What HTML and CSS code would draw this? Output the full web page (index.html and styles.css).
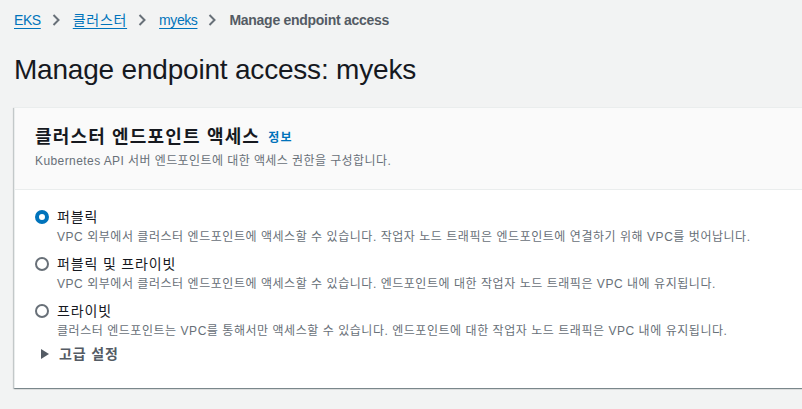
FILE: index.html
```html
<!DOCTYPE html>
<html lang="ko">
<head>
<meta charset="utf-8">
<title>Manage endpoint access</title>
<link rel="stylesheet" href="styles.css">
</head>
<body>
<div class="page">
  <nav class="breadcrumb">
    <a class="crumb-link" href="#">EKS</a>
    <svg class="chev" width="8" height="12" viewBox="0 0 8 12"><path d="M1.5 1 L6.5 6 L1.5 11" fill="none" stroke="#687078" stroke-width="2"/></svg>
    <a class="crumb-link ko" href="#">클러스터</a>
    <svg class="chev" width="8" height="12" viewBox="0 0 8 12"><path d="M1.5 1 L6.5 6 L1.5 11" fill="none" stroke="#687078" stroke-width="2"/></svg>
    <a class="crumb-link" href="#">myeks</a>
    <svg class="chev" width="8" height="12" viewBox="0 0 8 12"><path d="M1.5 1 L6.5 6 L1.5 11" fill="none" stroke="#687078" stroke-width="2"/></svg>
    <span class="crumb-current">Manage endpoint access</span>
  </nav>
  <h1 class="title">Manage endpoint access: myeks</h1>
  <section class="card">
    <header class="card-header">
      <h2 class="card-title">클러스터 엔드포인트 액세스 <a class="info" href="#">정보</a></h2>
      <p class="card-desc">Kubernetes API 서버 엔드포인트에 대한 액세스 권한을 구성합니다.</p>
    </header>
    <div class="card-body">
      <div class="radio-item">
        <span class="radio checked"></span>
        <div class="radio-text">
          <div class="radio-label">퍼블릭</div>
          <div class="radio-desc">VPC 외부에서 클러스터 엔드포인트에 액세스할 수 있습니다. 작업자 노드 트래픽은 엔드포인트에 연결하기 위해 VPC를 벗어납니다.</div>
        </div>
      </div>
      <div class="radio-item">
        <span class="radio"></span>
        <div class="radio-text">
          <div class="radio-label">퍼블릭 및 프라이빗</div>
          <div class="radio-desc">VPC 외부에서 클러스터 엔드포인트에 액세스할 수 있습니다. 엔드포인트에 대한 작업자 노드 트래픽은 VPC 내에 유지됩니다.</div>
        </div>
      </div>
      <div class="radio-item">
        <span class="radio"></span>
        <div class="radio-text">
          <div class="radio-label">프라이빗</div>
          <div class="radio-desc">클러스터 엔드포인트는 VPC를 통해서만 액세스할 수 있습니다. 엔드포인트에 대한 작업자 노드 트래픽은 VPC 내에 유지됩니다.</div>
        </div>
      </div>
      <div class="advanced">
        <svg class="caret" width="10" height="12" viewBox="0 0 10 12"><path d="M1 1 L9 6 L1 11 Z" fill="#545b64"/></svg>
        <span>고급 설정</span>
      </div>
    </div>
  </section>
</div>
</body>
</html>
```

FILE: styles.css
```css
* { box-sizing: border-box; }
html, body { margin: 0; padding: 0; }
body {
  background: #f2f3f3;
  font-family: "Liberation Sans", "Noto Sans CJK KR", sans-serif;
  color: #16191f;
  width: 802px;
  height: 409px;
  overflow: hidden;
}
.page {
  padding: 9px 0 0 14px;
  width: 830px;
}
.breadcrumb {
  display: flex;
  align-items: center;
  height: 22px;
  font-size: 14px;
  line-height: 22px;
  letter-spacing: -0.03em;
}
.crumb-link {
  color: #0073bb;
  text-decoration: underline;
  text-underline-offset: 3px;
}
.crumb-link.ko { letter-spacing: 0.05em; }
.chev { margin: 0 13px 0 11px; }
.crumb-current {
  color: #545b64;
  font-weight: 700;
  letter-spacing: -0.02em;
}
.title {
  margin: 21px 0 0 0;
  font-size: 28px;
  font-weight: 400;
  line-height: 36px;
  color: #16191f;
  letter-spacing: -0.2px;
}
.card {
  margin-top: 19px;
  background: #fff;
  border-top: 1px solid #eaeded;
  border-left: 1px solid #eaeded;
  box-shadow: 0 1px 1px 0 rgba(0,28,36,0.3), 1px 1px 1px 0 rgba(0,28,36,0.15), -1px 1px 1px 0 rgba(0,28,36,0.15);
  width: 820px;
}
.card-header {
  background: #fafafa;
  border-bottom: 1px solid #eaeded;
  padding: 15px 20px 0 20px;
  height: 82px;
}
.card-title {
  margin: 0;
  font-size: 18px;
  font-weight: 700;
  line-height: 28px;
  letter-spacing: 0.065em;
}
.info {
  font-size: 12px;
  font-weight: 700;
  color: #0073bb;
  text-decoration: none;
  margin-left: 2px;
  vertical-align: 1px;
  letter-spacing: 0.1em;
}
.card-desc {
  margin: 0;
  font-size: 12px;
  line-height: 18px;
  color: #687078;
  letter-spacing: 0.035em;
}
.card-body {
  padding: 16px 20px 0 20px;
  height: 198px;
}
.radio-item {
  display: flex;
  align-items: flex-start;
  gap: 8px;
  margin-bottom: 8px;
}
.radio {
  flex: none;
  width: 14px;
  height: 14px;
  margin-top: 4px;
  border: 2px solid #687078;
  border-radius: 50%;
  background: #fff;
}
.radio.checked {
  border: 4px solid #0073bb;
}
.radio-label {
  font-size: 14px;
  line-height: 22px;
  letter-spacing: 0.06em;
}
.radio-desc {
  margin-top: 1px;
  font-size: 12px;
  line-height: 16px;
  color: #687078;
  letter-spacing: 0.045em;
}
.advanced {
  display: flex;
  align-items: center;
  gap: 9px;
  padding-left: 5px;
  font-size: 14px;
  font-weight: 700;
  color: #545b64;
  line-height: 22px;
  margin-top: -4px;
  letter-spacing: 0.06em;
}
```
